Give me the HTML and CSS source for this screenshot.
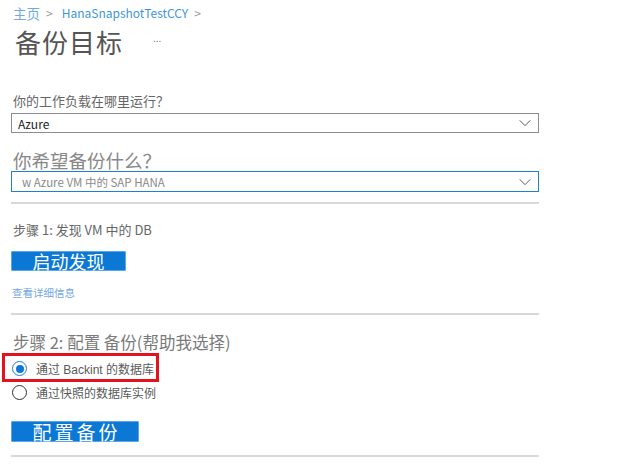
FILE: index.html
```html
<!DOCTYPE html>
<html lang="zh-CN">
<head>
    <meta charset="UTF-8">
    <title>备份目标</title>
    <link rel="stylesheet" href="styles.css">
</head>
<body>
    <nav class="breadcrumb">
        <a class="crumb home">主页</a>
        <span class="sep">&gt;</span>
        <a class="crumb vault">HanaSnapshotTestCCY</a>
        <span class="sep">&gt;</span>
    </nav>

    <header class="page-head">
        <h1>备份目标</h1>
        <span class="more">...</span>
    </header>

    <main class="form">
        <label class="field-label">你的工作负载在哪里运行？</label>
        <div class="select">
            <span class="value">Azure</span>
            <svg class="chevron" viewBox="0 0 16 16"><path d="M2 5l6 6 6-6" fill="none" stroke="currentColor" stroke-width="1.1"/></svg>
        </div>

        <label class="field-label big">你希望备份什么？</label>
        <div class="select focused">
            <span class="value dim">w Azure VM 中的 SAP HANA</span>
            <svg class="chevron" viewBox="0 0 16 16"><path d="M2 5l6 6 6-6" fill="none" stroke="currentColor" stroke-width="1.1"/></svg>
        </div>
        <hr class="divider first">

        <div class="step">步骤 1: 发现 VM 中的 DB</div>
        <button class="primary discover">启动发现</button>
        <a class="details">查看详细信息</a>
        <hr class="divider">

        <div class="step big">步骤 2: 配置 备份(帮助我选择)</div>
        <div class="choices">
            <label class="choice highlighted">
                <span class="radio checked"></span>
                通过 Backint 的数据库
            </label>
            <label class="choice">
                <span class="radio"></span>
                通过快照的数据库实例
            </label>
        </div>
        <button class="primary configure">配置备份</button>
        <hr class="divider last">
    </main>
</body>
</html>
```

FILE: styles.css
```css
* {
    margin: 0;
    padding: 0;
    box-sizing: border-box;
    font-family: "Noto Sans CJK SC", "Liberation Sans", sans-serif;
}

body {
    background: #fff;
    color: #555;
    width: 617px;
    height: 464px;
    overflow: hidden;
}

.breadcrumb {
    display: flex;
    align-items: center;
    gap: 6px;
    padding: 3px 0 0 13px;
    height: 22px;
    font-size: 12px;
}

.crumb.home {
    color: #72a9e2;
    font-size: 13.5px;
}

.crumb.vault {
    color: #3f95e0;
    margin-left: 3px;
}

.sep {
    color: #9a9a9a;
}

.page-head {
    display: flex;
    align-items: center;
    padding-left: 15px;
    height: 38px;
}

.page-head h1 {
    font-size: 26px;
    font-weight: 400;
    color: #555;
    letter-spacing: 1px;
}

.more {
    margin: -8px 0 0 30px;
    font-size: 10px;
    color: #777;
}

.form {
    display: flex;
    flex-direction: column;
    align-items: flex-start;
    width: 528px;
    margin-left: 11px;
    padding-top: 32px;
}

.field-label {
    font-size: 13px;
    color: #666;
    padding-left: 2px;
    line-height: 18px;
    margin-bottom: 3px;
}

.field-label.big {
    font-size: 18.5px;
    color: #888;
    line-height: 21px;
    margin: 17px 0 0 2px;
    padding: 0;
}

.select {
    width: 100%;
    height: 20px;
    border: 1px solid #8d8d8d;
    display: flex;
    align-items: center;
    justify-content: space-between;
    padding: 0 6px;
    font-size: 12px;
    color: #222;
}

.select.focused {
    height: 21px;
    border: 1.5px solid #1e7fd8;
    padding-left: 10px;
}

.value.dim {
    color: #8a8a8a;
    font-size: 11.5px;
}

.chevron {
    width: 14px;
    height: 14px;
    color: #555;
}

.divider {
    width: 100%;
    border: none;
    border-top: 2px solid #d8d8d8;
}

.divider.first {
    margin-top: 10px;
}

.divider.last {
    margin-top: 13px;
}

.step {
    font-size: 13px;
    color: #666;
    padding-left: 2px;
    margin-top: 17px;
    line-height: 18px;
}

.step.big {
    font-size: 16.5px;
    color: #7a7a7a;
    margin-top: 16px;
    line-height: 22px;
}

.primary {
    display: block;
    background: #0b78d6;
    color: #fff;
    border: 1px solid #5aa6e6;
    border-radius: 1px;
    height: 20px;
    cursor: pointer;
}

.primary.discover {
    width: 115px;
    margin-top: 12px;
    font-size: 18px;
    line-height: 19px;
}

.primary.configure {
    width: 128px;
    height: 21px;
    margin-top: 19px;
    font-size: 19px;
    line-height: 20px;
    letter-spacing: 3px;
    padding-left: 3px;
}

.details {
    font-size: 10.5px;
    color: #74a8e0;
    margin: 14px 0 12px 1px;
    line-height: 16px;
}

.choices {
    display: flex;
    flex-direction: column;
    margin-left: -9px;
}

.choice {
    display: flex;
    align-items: center;
    gap: 9px;
    font-family: "Liberation Sans", "Noto Sans CJK SC", sans-serif;
    font-size: 12px;
    color: #5a5a5a;
    height: 20px;
    padding-left: 10px;
}

.choice.highlighted {
    width: 157px;
    height: 29px;
    border: 3px solid #e3121c;
    padding: 2px 0 0 7px;
}

.radio {
    width: 15px;
    height: 15px;
    border-radius: 50%;
    border: 1.5px solid #333;
    display: flex;
    align-items: center;
    justify-content: center;
}

.radio.checked {
    border-color: #1e7fd8;
}

.radio.checked::after {
    content: "";
    width: 8px;
    height: 8px;
    border-radius: 50%;
    background: #0b78d6;
}
```
